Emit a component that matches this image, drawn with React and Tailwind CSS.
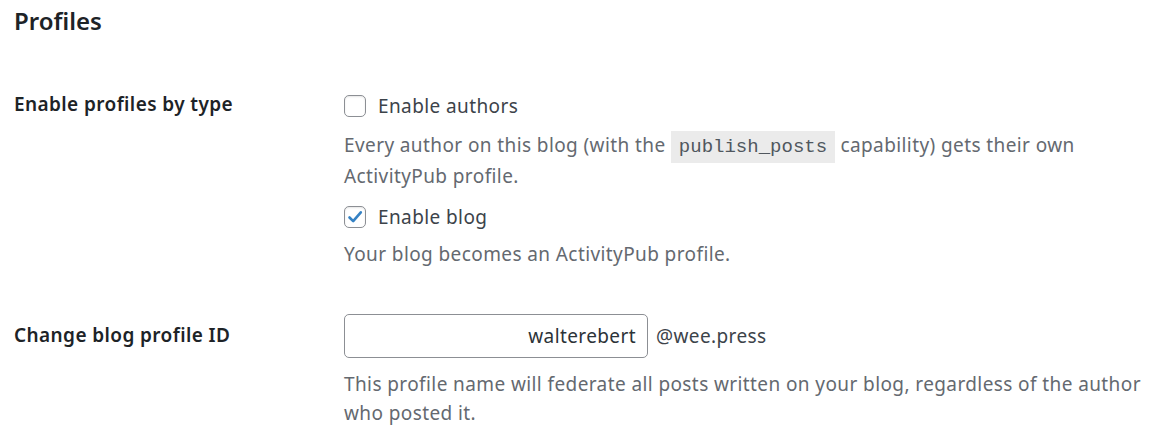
import { useState } from "react";

const font = { fontFamily: '"Noto Sans", "Open Sans", sans-serif' };

function Checkbox({ checked, onChange, label }) {
  return (
    <label className="flex h-8 cursor-pointer items-center gap-3">
      <span
        onClick={onChange}
        className="flex h-[22px] w-[22px] items-center justify-center rounded-[5px] border border-[#8c8f94] bg-white shadow-[inset_0_1px_2px_rgba(0,0,0,0.1)]"
      >
        {checked && (
          <svg viewBox="0 0 20 20" className="h-[20px] w-[20px]">
            <path
              d="M4.5 10.5 L8.2 14.2 L15.8 5.3"
              fill="none"
              stroke="#3582c4"
              strokeWidth="2.6"
              strokeLinecap="round"
              strokeLinejoin="round"
            />
          </svg>
        )}
      </span>
      <span className="text-[19px] tracking-[0.4px] text-[#3c434a]">{label}</span>
    </label>
  );
}

export default function App() {
  const [authors, setAuthors] = useState(false);
  const [blog, setBlog] = useState(true);
  const [handle, setHandle] = useState("walterebert");

  return (
    <div className="h-[440px] w-[1150px] overflow-hidden bg-white pl-[14px]" style={font}>
      <h2 className="pt-[5px] text-[24px] font-semibold leading-8 text-[#1d2327]">
        Profiles
      </h2>

      <div className="mt-[53px] flex items-start">
        <div className="w-[330px] shrink-0 text-[19px] font-semibold leading-7 tracking-[0.4px] text-[#1d2327]">
          Enable profiles by type
        </div>
        <div className="flex w-[805px] flex-col text-[19px] tracking-[0.4px]">
          <Checkbox
            checked={authors}
            onChange={() => setAuthors(!authors)}
            label="Enable authors"
          />
          <p className="mt-2 pr-[50px] leading-[31px] text-[#646970]">
            Every author on this blog (with the{" "}
            <code
              className="bg-[#ebebeb] px-2 py-[5px] text-[19px] leading-none tracking-normal text-[#50575e]"
              style={{ fontFamily: '"Liberation Mono", monospace' }}
            >
              publish_posts
            </code>{" "}
            capability) gets their own ActivityPub profile.
          </p>
          <div className="mt-[9px]">
            <Checkbox
              checked={blog}
              onChange={() => setBlog(!blog)}
              label="Enable blog"
            />
          </div>
          <p className="mt-[7px] leading-[29px] text-[#646970]">
            Your blog becomes an ActivityPub profile.
          </p>
        </div>
      </div>

      <div className="mt-[45px] flex items-start">
        <div className="w-[330px] shrink-0 pt-[7px] text-[19px] font-semibold leading-7 tracking-[0.4px] text-[#1d2327]">
          Change blog profile ID
        </div>
        <div className="flex w-[805px] flex-col text-[19px] tracking-[0.4px]">
          <div className="flex items-center gap-2">
            <input
              value={handle}
              onChange={(e) => setHandle(e.target.value)}
              className="h-[44px] w-[304px] rounded-[5px] border border-[#8c8f94] bg-white px-[11px] text-right text-[19px] tracking-[0.4px] text-[#2c3338] outline-none"
              style={font}
            />
            <span className="text-[#3c434a]">@wee.press</span>
          </div>
          <p className="mt-[12px] leading-[29px] text-[#646970]">
            This profile name will federate all posts written on your blog,
            regardless of the author who posted it.
          </p>
        </div>
      </div>
    </div>
  );
}
